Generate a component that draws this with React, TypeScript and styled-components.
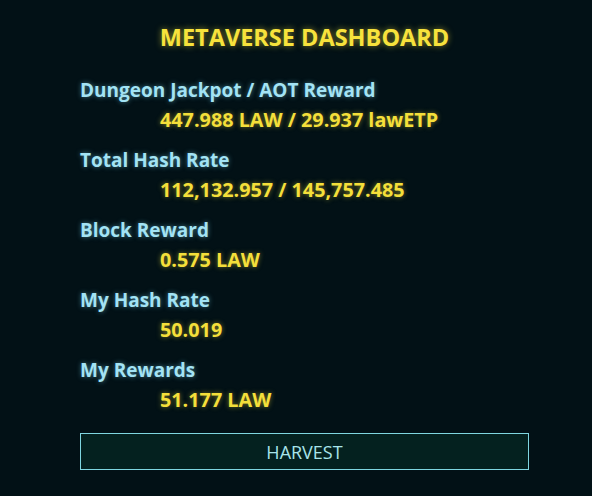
import React from "react";
import styled, { createGlobalStyle } from "styled-components";

const Global = createGlobalStyle`
  html, body { margin: 0; padding: 0; background: #021116; }
  body { font-family: "Open Sans", "Noto Sans", sans-serif; }
`;

const Page = styled.div`
  width: 592px;
  height: 496px;
  box-sizing: border-box;
  padding-left: 80px;
  background: #021116;
  display: flex;
`;

const Panel = styled.div`
  width: 449px;
  padding-top: 22px;
  display: flex;
  flex-direction: column;
`;

const Title = styled.h1`
  margin: 0 0 23px;
  text-align: center;
  font-size: 23.5px;
  line-height: 30px;
  font-weight: 700;
  color: #f7e23c;
  text-shadow: 0 0 6px rgba(247, 226, 60, 0.55);
`;

const Stat = styled.div`
  display: flex;
  flex-direction: column;
  margin-bottom: 10px;
`;

const Label = styled.div`
  font-size: 19px;
  line-height: 30px;
  font-weight: 700;
  color: #a3e3f4;
  text-shadow: 0 0 5px rgba(120, 210, 240, 0.55);
`;

const Value = styled.div`
  padding-left: 80px;
  font-size: 19.8px;
  line-height: 30px;
  font-weight: 700;
  color: #f4df3a;
  text-shadow: 0 0 5px rgba(244, 223, 58, 0.5);
`;

const Harvest = styled.button`
  margin-top: 8px;
  width: 449px;
  height: 37px;
  background: #04211f;
  border: 1px solid #7fd6e0;
  color: #a8e4ea;
  font-family: "Open Sans", "Noto Sans", sans-serif;
  font-size: 18px;
  cursor: pointer;
`;

const stats = [
  ["Dungeon Jackpot / AOT Reward", "447.988 LAW / 29.937 lawETP"],
  ["Total Hash Rate", "112,132.957 / 145,757.485"],
  ["Block Reward", "0.575 LAW"],
  ["My Hash Rate", "50.019"],
  ["My Rewards", "51.177 LAW"],
];

export default function App() {
  return (
    <Page>
      <Global />
      <Panel>
        <Title>METAVERSE DASHBOARD</Title>
        {stats.map(([l, v]) => (
          <Stat key={l}>
            <Label>{l}</Label>
            <Value>{v}</Value>
          </Stat>
        ))}
        <Harvest>HARVEST</Harvest>
      </Panel>
    </Page>
  );
}
